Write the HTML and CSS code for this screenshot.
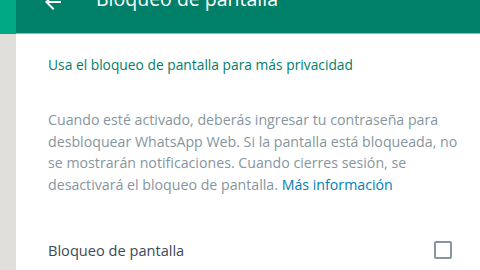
FILE: index.html
```html
<!DOCTYPE html>
<html lang="es">
<head>
  <meta charset="UTF-8" />
  <title>Bloqueo de pantalla</title>
  <link rel="stylesheet" href="styles.css">
</head>
<body>
  <div class="app">
    <!-- Franja lateral -->
    <div class="side">
      <div class="side-top"></div>
      <div class="side-bottom"></div>
    </div>

    <div class="drawer">
      <header class="header">
        <div class="header-row">
          <button class="back" aria-label="Volver">
            <svg viewBox="0 0 24 24" width="24" height="24"><path fill="currentColor" d="M12 4l1.4 1.4L7.8 11H20v2H7.8l5.6 5.6L12 20l-8-8 8-8z"/></svg>
          </button>
          <h1 class="title">Bloqueo de pantalla</h1>
        </div>
      </header>

      <section class="content">
        <p class="intro">Usa el bloqueo de pantalla para más privacidad</p>
        <p class="desc">Cuando esté activado, deberás ingresar tu contraseña para desbloquear WhatsApp Web. Si la pantalla está bloqueada, no se mostrarán notificaciones. Cuando cierres sesión, se desactivará el bloqueo de pantalla. <a href="#" class="link">Más información</a></p>
        <label class="option">
          <span>Bloqueo de pantalla</span>
          <span class="check"></span>
        </label>
      </section>
    </div>
  </div>
</body>
</html>
```

FILE: styles.css
```css
* {
  box-sizing: border-box;
  margin: 0;
  padding: 0;
}

html, body {
  height: 100%;
  overflow: hidden;
  font-family: "Open Sans", "Noto Sans", sans-serif;
  background-color: #fff;
}

.app {
  display: flex;
  height: 100%;
}

.side {
  width: 16px;
  display: flex;
  flex-direction: column;
}

.side-top {
  height: 34px;
  background-color: #00a884;
}

.side-bottom {
  flex: 1;
  background-color: #e1dfdb;
}

.drawer {
  flex: 1;
  display: flex;
  flex-direction: column;
}

.header {
  height: 34px;
  background-color: #008069;
  border-bottom: 1px solid #7fc6b6;
  overflow: hidden;
}

.header-row {
  display: flex;
  align-items: center;
  margin-top: -20px;
  height: 36px;
  padding-left: 25px;
  color: #fff;
}

.back {
  background: none;
  border: none;
  color: #fff;
  width: 24px;
  height: 24px;
  margin-top: 8px;
  display: flex;
}

.title {
  margin-left: 31px;
  font-size: 19.5px;
  font-weight: 500;
}

.content {
  padding: 21px 16px 0 32px;
}

.intro {
  font-size: 13.8px;
  line-height: 20px;
  color: #008069;
}

.desc {
  margin-top: 34px;
  font-size: 14.2px;
  line-height: 21.5px;
  color: #8696a0;
}

.link {
  color: #027eb5;
  text-decoration: none;
}

.option {
  margin-top: 45px;
  padding-right: 12px;
  display: flex;
  justify-content: space-between;
  align-items: center;
  font-size: 14.6px;
  line-height: 20px;
  color: #3b4a54;
}

.check {
  width: 18px;
  height: 18px;
  border: 2px solid #8696a0;
  border-radius: 2px;
}
```
